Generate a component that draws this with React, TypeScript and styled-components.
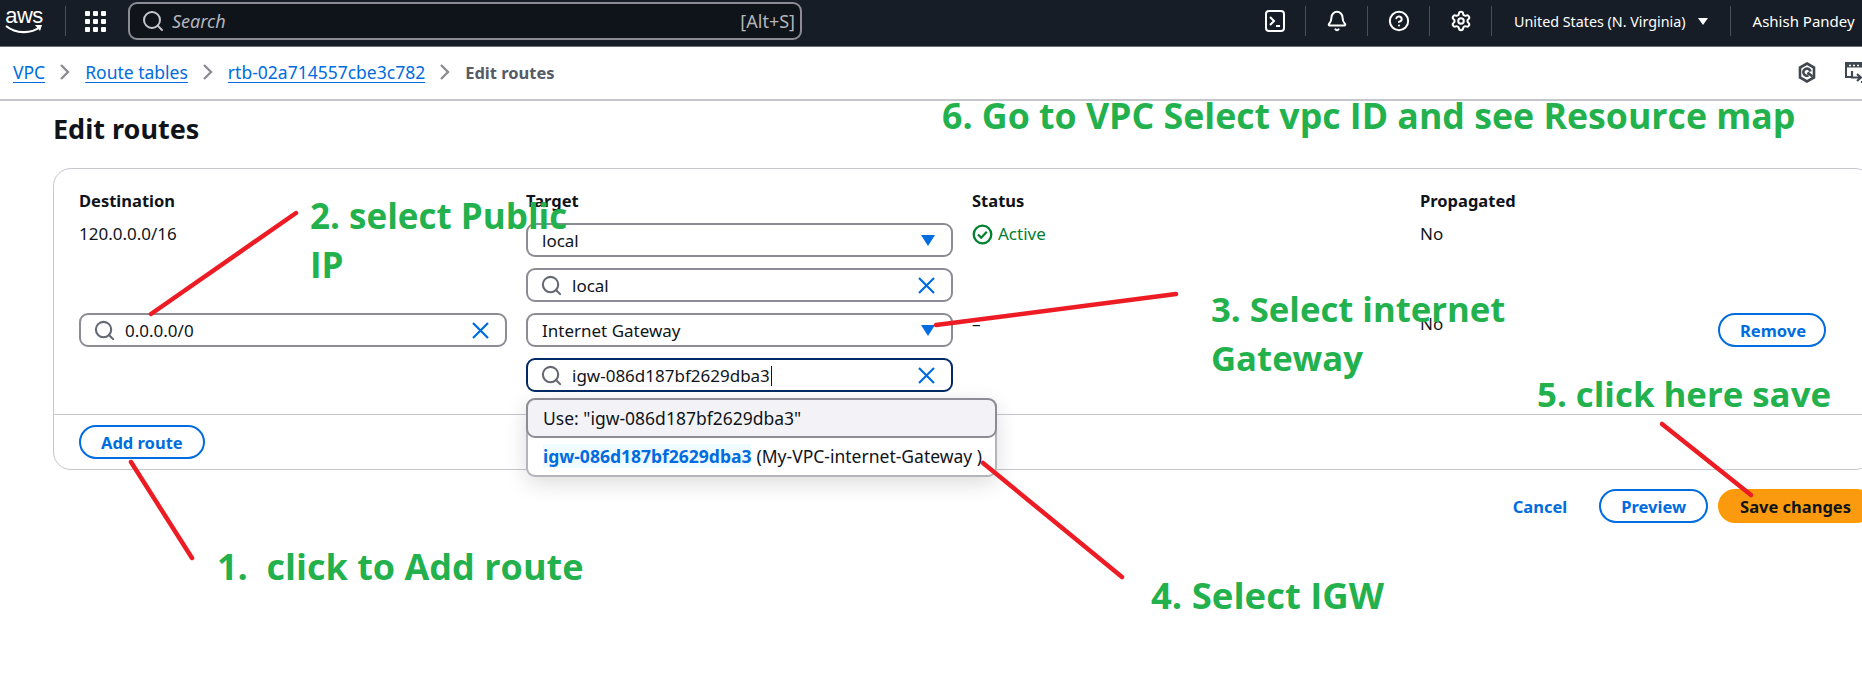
import React from 'react';
import styled, { createGlobalStyle } from 'styled-components';
import { Bell, CircleHelp, Search, Settings } from 'lucide-react';

const GlobalStyle = createGlobalStyle`
  html, body {
    margin: 0;
    padding: 0;
    background: #fff;
  }
  body {
    font-family: 'Noto Sans', 'Open Sans', sans-serif;
    font-size: 17px;
    color: #0f141a;
  }
`;

const Page = styled.div`
  position: relative;
  width: 1862px;
  height: 690px;
  overflow: hidden;
  background: #fff;
`;

/* top navigation */
const TopBar = styled.header`
  display: flex;
  align-items: center;
  box-sizing: border-box;
  height: 47px;
  padding: 0 0 4px 5px;
  background: #161d26;
  border-bottom: 1px solid #6b6f76;
  color: #fff;
  white-space: nowrap;
`;

const Logo = styled.div`
  display: flex;
  flex-direction: column;
  align-items: center;
  flex: none;
  width: 38px;
  margin-right: 22px;
`;

const LogoText = styled.span`
  font-family: 'Liberation Sans', sans-serif;
  font-size: 22px;
  line-height: 17px;
  letter-spacing: -0.5px;
`;

const NavDivider = styled.span`
  flex: none;
  width: 1px;
  height: 30px;
  background: #4a4f57;
`;

const DotsGrid = styled.div`
  display: grid;
  flex: none;
  grid-template-columns: repeat(3, 5px);
  gap: 3px;
  margin: 0 22px 0 19px;
`;

const Dot = styled.span`
  width: 5px;
  height: 5px;
  border-radius: 1px;
  background: #fff;
`;

const SearchBar = styled.div`
  display: flex;
  flex: none;
  align-items: center;
  box-sizing: border-box;
  width: 674px;
  height: 38px;
  padding: 0 5px 0 11px;
  gap: 7px;
  background: #0f141a;
  border: 2px solid #8c8c94;
  border-radius: 9px;
  color: #b4b4bb;
  font-size: 18px;
`;

const SearchHint = styled.span`
  font-style: italic;
  flex: 1;
`;

const NavIcon = styled.span`
  display: flex;
  justify-content: center;
  align-items: center;
  width: 61px;
  color: #fff;
`;

const NavIcons = styled.div`
  display: flex;
  align-items: center;
  margin-left: 442px;
`;

const RegionText = styled.span<{ $size: number }>`
  font-size: ${(p) => p.$size}px;
  padding-left: 22px;
  padding-right: 12px;
`;

const Caret = styled.span`
  width: 0;
  height: 0;
  margin-right: 22px;
  border-left: 5px solid transparent;
  border-right: 5px solid transparent;
  border-top: 7px solid #fff;
`;

/* breadcrumbs */
const SubBar = styled.nav`
  display: flex;
  align-items: center;
  height: 52px;
  padding: 0 0 1px 13px;
  box-sizing: content-box;
  border-bottom: 2px solid #c6c6cd;
  margin-top: -1px;
  font-size: 17.5px;
`;

const Crumb = styled.a`
  color: #006ce0;
  text-decoration: underline;
  text-underline-offset: 3px;
`;

const CurrentCrumb = styled.span`
  color: #565b66;
  font-weight: 700;
  font-size: 16.5px;
`;

const Chevron = styled.svg`
  margin: 0 14px;
  flex: none;
`;

const SubIcons = styled.div`
  display: flex;
  align-items: center;
  gap: 28px;
  margin-left: auto;
  margin-right: -10px;
`;

/* content */
const Content = styled.main`
  width: 1820px;
  margin-left: 53px;
`;

const Heading = styled.h1`
  margin: 0;
  padding-top: 10px;
  height: 67px;
  box-sizing: border-box;
  font-size: 27px;
  line-height: 36px;
  font-weight: 700;
  color: #0f141a;
`;

const Card = styled.section`
  box-sizing: border-box;
  height: 302px;
  border: 1px solid #c6c6cd;
  border-radius: 18px;
`;

const RouteGrid = styled.div`
  display: grid;
  grid-template-columns: 428px 427px 429px 279px 108px;
  column-gap: 19px;
  row-gap: 11px;
  box-sizing: border-box;
  height: 246px;
  padding: 21px 0 0 25px;
  align-content: start;
  border-bottom: 1px solid #c6c6cd;
  align-items: start;
`;

const HeaderCell = styled.div`
  grid-row: 1;
  height: 22px;
  font-weight: 700;
  font-size: 16.5px;
  line-height: 22px;
`;

const ValueCell = styled.div`
  line-height: 22px;
  display: flex;
  align-items: center;
  gap: 5px;
`;

const StatusText = styled.span`
  color: #00802f;
`;

const Stack = styled.div`
  position: relative;
  display: flex;
  flex-direction: column;
  gap: 11px;
`;

const Field = styled.div<{ $focused?: boolean }>`
  display: flex;
  align-items: center;
  box-sizing: border-box;
  height: 34px;
  padding: 0 16px 0 14px;
  border: 2px solid ${(p) => (p.$focused ? '#002a66' : '#8c8c94')};
  border-radius: 9px;
  background: #fff;
`;

const FieldValue = styled.span<{ $indent?: boolean }>`
  flex: 1;
  padding-left: ${(p) => (p.$indent ? 9 : 0)}px;
`;

const FieldSearchIcon = styled(Search)`
  flex: none;
  margin-left: -2px;
`;

const TextCaret = styled.span`
  display: inline-block;
  width: 1px;
  height: 20px;
  margin-left: 1px;
  vertical-align: -4px;
  background: #0f141a;
`;

const Menu = styled.div`
  position: absolute;
  z-index: 2;
  top: 85px;
  left: 0;
  box-sizing: border-box;
  width: 471px;
  height: 79px;
  background: #fff;
  border: 2px solid #b4b4bb;
  border-top: none;
  border-radius: 9px;
  box-shadow: 0 6px 22px rgba(0, 7, 22, 0.14);
  font-size: 17.5px;
`;

const MenuUse = styled.div`
  box-sizing: border-box;
  height: 40px;
  margin: 0 -2px;
  padding: 0 15px;
  display: flex;
  align-items: center;
  background: #f3f3f7;
  border: 2px solid #8c8c94;
  border-radius: 9px;
`;

const MenuOption = styled.div`
  display: flex;
  align-items: center;
  height: 36px;
  padding-left: 15px;
  white-space: nowrap;
`;

const MenuMatch = styled.span`
  color: #006ce0;
  font-weight: 700;
  background: #f0fbff;
  margin-right: 5px;
`;

const Button = styled.button<{ $variant?: 'primary' | 'normal' | 'link' }>`
  box-sizing: border-box;
  height: 34px;
  padding: 0 20px;
  border-radius: 17px;
  border: 2px solid
    ${(p) =>
      p.$variant === 'primary'
        ? '#ff9900'
        : p.$variant === 'link'
          ? 'transparent'
          : '#006ce0'};
  background: ${(p) => (p.$variant === 'primary' ? '#fb9a0e' : 'transparent')};
  color: ${(p) => (p.$variant === 'primary' ? '#0f141a' : '#006ce0')};
  font-family: inherit;
  font-size: 16.5px;
  font-weight: 700;
  white-space: nowrap;
`;

const CardFooter = styled.div`
  padding: 10px 25px;
`;

const ActionRow = styled.div`
  display: flex;
  justify-content: flex-end;
  align-items: center;
  gap: 10px;
  padding-top: 19px;
`;

/* markup drawn over the screenshot */
const Overlay = styled.svg`
  position: absolute;
  inset: 0;
  z-index: 3;
  pointer-events: none;
`;

const Note = styled.div<{ $x: number; $y: number; $size: number }>`
  position: absolute;
  z-index: 3;
  left: ${(p) => p.$x}px;
  top: ${(p) => p.$y}px;
  color: #22b14c;
  font-family: 'Open Sans', 'Noto Sans', sans-serif;
  font-size: ${(p) => p.$size}px;
  font-weight: 700;
  line-height: 49px;
  white-space: pre;
`;

const redLines = [
  [296, 213, 151, 314],
  [1176, 294, 936, 325],
  [983, 463, 1122, 577],
  [1662, 424, 1751, 495],
  [131, 462, 192, 558],
];

const dots = Array.from({ length: 9 });

function Arrow() {
  return (
    <svg width="14" height="11" viewBox="0 0 14 11" style={{ flex: 'none' }}>
      <path d="M0 0h14L7 11z" fill="#006ce0" />
    </svg>
  );
}

function ClearIcon() {
  return (
    <svg width="17" height="17" viewBox="0 0 17 17" fill="none" stroke="#006ce0" strokeWidth="2.2" style={{ flex: 'none' }}>
      <path d="M1 1l15 15M16 1L1 16" />
    </svg>
  );
}

function CrumbChevron() {
  return (
    <Chevron width="12" height="18" viewBox="0 0 12 18" fill="none" stroke="#8c8c94" strokeWidth="2.4">
      <path d="M2 2l7 7-7 7" />
    </Chevron>
  );
}

function SearchField({ value, focused, children }: { value: string; focused?: boolean; children?: React.ReactNode }) {
  return (
    <Field $focused={focused}>
      <FieldSearchIcon size={23} color="#656871" strokeWidth={2.2} />
      <FieldValue $indent>
        {value}
        {children}
      </FieldValue>
      <ClearIcon />
    </Field>
  );
}

function SelectField({ value }: { value: string }) {
  return (
    <Field>
      <FieldValue>{value}</FieldValue>
      <Arrow />
    </Field>
  );
}

export default function App() {
  return (
    <Page>
      <GlobalStyle />
      <TopBar>
        <Logo>
          <LogoText>aws</LogoText>
          <svg width="38" height="11" viewBox="0 0 38 11">
            <path d="M1 2c10 8 25 8 34 1" fill="none" stroke="#fff" strokeWidth="2.2" />
            <path d="M30 1l7 0-2 6z" fill="#fff" />
          </svg>
        </Logo>
        <NavDivider />
        <DotsGrid>
          {dots.map((_, i) => (
            <Dot key={i} />
          ))}
        </DotsGrid>
        <SearchBar>
          <Search size={24} color="#c6c6cd" />
          <SearchHint>Search</SearchHint>
          <span>[Alt+S]</span>
        </SearchBar>
        <NavIcons>
          <NavIcon>
            <svg width="22" height="24" viewBox="0 0 22 24" fill="none" stroke="#fff" strokeWidth="2">
              <rect x="2" y="2" width="18" height="20" rx="3" />
              <path d="M6 8l4 4-4 4M12 17h4" />
            </svg>
          </NavIcon>
          <NavDivider />
          <NavIcon>
            <Bell size={22} strokeWidth={2.2} />
          </NavIcon>
          <NavDivider />
          <NavIcon>
            <CircleHelp size={22} strokeWidth={2.2} />
          </NavIcon>
          <NavDivider />
          <NavIcon>
            <Settings size={22} strokeWidth={2.2} />
          </NavIcon>
          <NavDivider />
          <RegionText $size={14.3}>United States (N. Virginia)</RegionText>
          <Caret />
          <NavDivider />
          <RegionText $size={15}>Ashish Pandey</RegionText>
          <Caret />
        </NavIcons>
      </TopBar>
      <SubBar>
        <Crumb>VPC</Crumb>
        <CrumbChevron />
        <Crumb>Route tables</Crumb>
        <CrumbChevron />
        <Crumb>rtb-02a714557cbe3c782</Crumb>
        <CrumbChevron />
        <CurrentCrumb>Edit routes</CurrentCrumb>
        <SubIcons>
          <svg width="18" height="21" viewBox="0 0 18 21" fill="none" stroke="#414750" strokeWidth="2.6">
            <path d="M9 1.5l7 4v10l-7 4-7-4v-10z" />
            <path d="M12.5 9.5a3.6 3.6 0 1 0-2 3.9M9.5 10.5l5 4" />
          </svg>
          <svg width="28" height="21" viewBox="0 0 28 21" fill="none" stroke="#414750" strokeWidth="2">
            <path d="M7 15H2V1h24v9" />
            <path d="M2 3.5h24" strokeWidth="4" />
            <path d="M5 3.5h2M9 3.5h2M13 3.5h2" stroke="#fff" strokeWidth="1.5" />
            <path d="M8 9v6.5h8M13 12l4 3.5-4 3.5M17 20h10" strokeWidth="2.2" />
          </svg>
        </SubIcons>
      </SubBar>
      <Content>
        <Heading>Edit routes</Heading>
        <Card>
          <RouteGrid>
            <HeaderCell>Destination</HeaderCell>
            <HeaderCell>Target</HeaderCell>
            <HeaderCell>Status</HeaderCell>
            <HeaderCell>Propagated</HeaderCell>
            <HeaderCell />

            <ValueCell>120.0.0.0/16</ValueCell>
            <Stack>
              <SelectField value="local" />
              <SearchField value="local" />
            </Stack>
            <ValueCell>
              <svg width="21" height="21" viewBox="0 0 21 21" fill="none" stroke="#00802f" strokeWidth="2.3">
                <circle cx="10.5" cy="10.5" r="8.8" />
                <path d="M6 10.5l3.2 3.2 5.6-6" />
              </svg>
              <StatusText>Active</StatusText>
            </ValueCell>
            <ValueCell>No</ValueCell>
            <div />

            <SearchField value="0.0.0.0/0" />
            <Stack>
              <SelectField value="Internet Gateway" />
              <SearchField value="igw-086d187bf2629dba3" focused>
                <TextCaret />
              </SearchField>
              <Menu>
                <MenuUse>Use: "igw-086d187bf2629dba3"</MenuUse>
                <MenuOption>
                  <MenuMatch>igw-086d187bf2629dba3</MenuMatch>
                  (My-VPC-internet-Gateway )
                </MenuOption>
              </Menu>
            </Stack>
            <ValueCell>–</ValueCell>
            <ValueCell>No</ValueCell>
            <Button>Remove</Button>
          </RouteGrid>
          <CardFooter>
            <Button>Add route</Button>
          </CardFooter>
        </Card>
        <ActionRow>
          <Button $variant="link">Cancel</Button>
          <Button>Preview</Button>
          <Button $variant="primary">Save changes</Button>
        </ActionRow>
      </Content>

      <Overlay width="1862" height="690">
        {redLines.map(([x1, y1, x2, y2]) => (
          <line key={x1} x1={x1} y1={y1} x2={x2} y2={y2} stroke="#ed1c24" strokeWidth="4.5" strokeLinecap="round" />
        ))}
      </Overlay>
      <Note $x={942} $y={91} $size={35.7}>6. Go to VPC Select vpc ID and see Resource map</Note>
      <Note $x={310} $y={191} $size={35}>{'2. select Public\nIP'}</Note>
      <Note $x={1211} $y={284} $size={34.7}>{'3. Select internet\nGateway'}</Note>
      <Note $x={1537} $y={369} $size={34.8}>5. click here save</Note>
      <Note $x={217} $y={542} $size={36}>1.  click to Add route</Note>
      <Note $x={1151} $y={571} $size={36.5}>4. Select IGW</Note>
    </Page>
  );
}
